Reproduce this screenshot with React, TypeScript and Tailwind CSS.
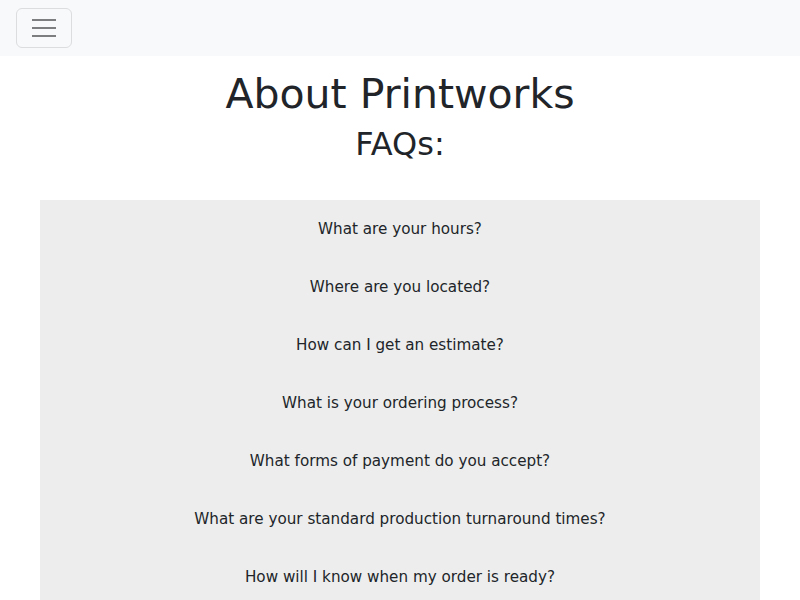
const questions = [
  'What are your hours?',
  'Where are you located?',
  'How can I get an estimate?',
  'What is your ordering process?',
  'What forms of payment do you accept?',
  'What are your standard production turnaround times?',
  'How will I know when my order is ready?',
]

export default function App() {
  return (
    <div className="min-h-screen bg-white text-[#212529] font-['DejaVu_Sans',sans-serif]">
      {/* navbar */}
      <nav className="h-14 bg-[#f8f9fa] flex items-center px-4">
        <button className="w-14 h-10 border border-[#dcdddf] rounded-md flex flex-col items-center justify-center gap-[6px]">
          <span className="block w-6 h-[2px] bg-[#7d7e80]" />
          <span className="block w-6 h-[2px] bg-[#7d7e80]" />
          <span className="block w-6 h-[2px] bg-[#7d7e80]" />
        </button>
      </nav>

      <main className="text-center">
        <h1 className="mt-[14px] text-[41px] leading-[48px]">About Printworks</h1>
        <h2 className="mt-[7px] text-[32px] leading-[38px]">FAQs:</h2>

        <div className="mx-10 mt-[37px] bg-[#ededed] flex flex-col">
          {questions.map((q) => (
            <p key={q} className="pt-[17px] pb-[17px] text-[15.2px] leading-6">
              {q}
            </p>
          ))}
        </div>
      </main>
    </div>
  )
}
